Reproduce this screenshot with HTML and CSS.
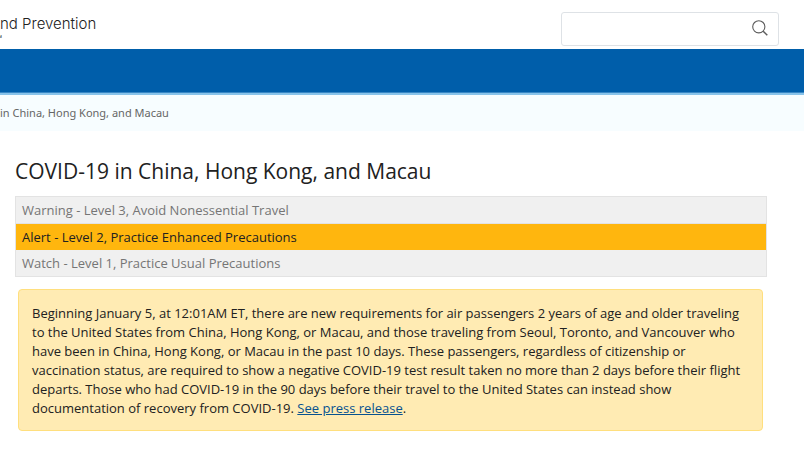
FILE: index.html
```html
<!DOCTYPE html>
<html lang="en">
<head>
<meta charset="utf-8">
<title>COVID-19 in China, Hong Kong, and Macau</title>
<link rel="stylesheet" href="styles.css">
</head>
<body>
<header class="site-header">
  <div class="brand">
    <span class="brand-name">nd Prevention</span>
    <span class="brand-mark">™</span>
  </div>
  <form class="search" role="search">
    <input class="search-input" type="search" aria-label="Search">
    <button class="search-button" type="submit" aria-label="Submit search">
      <svg viewBox="0 0 16 16" width="16" height="16" fill="none" stroke="#5c5c5c" aria-hidden="true">
        <circle cx="6.8" cy="6.8" r="6.1" stroke-width="1.1"/>
        <path d="M11.2 11.2L15.3 15.3" stroke-width="1.5"/>
      </svg>
    </button>
  </form>
</header>
<nav class="main-nav" aria-label="Main"></nav>
<div class="breadcrumb">in China, Hong Kong, and Macau</div>
<main class="content">
  <h1 class="title">COVID-19 in China, Hong Kong, and Macau</h1>
  <ul class="levels">
    <li class="level">Warning - Level 3, Avoid Nonessential Travel</li>
    <li class="level level-active">Alert - Level 2, Practice Enhanced Precautions</li>
    <li class="level">Watch - Level 1, Practice Usual Precautions</li>
  </ul>
  <p class="notice">Beginning January 5, at 12:01AM ET, there are new requirements for air passengers 2 years of age and older traveling to the United States from China, Hong Kong, or Macau, and those traveling from Seoul, Toronto, and Vancouver who have been in China, Hong Kong, or Macau in the past 10 days. These passengers, regardless of citizenship or vaccination status, are required to show a negative COVID-19 test result taken no more than 2 days before their flight departs. Those who had COVID-19 in the 90 days before their travel to the United States can instead show documentation of recovery from COVID-19. <a class="notice-link" href="#">See press release</a>.</p>
</main>
</body>
</html>
```

FILE: styles.css
```css
* {
  box-sizing: border-box;
}

body {
  margin: 0;
  background: #fff;
  color: #212121;
  font-family: "Open Sans", sans-serif;
  font-size: 13px;
  line-height: 19px;
}

.site-header {
  display: flex;
  justify-content: space-between;
  align-items: flex-start;
  padding: 12px 25px 3px 0;
}

.brand {
  display: flex;
  flex-direction: column;
  padding-top: 2px;
}

.brand-name {
  font-family: Inter, sans-serif;
  font-size: 15px;
  font-weight: 300;
  line-height: 20px;
}

.brand-mark {
  margin-left: -4px;
  font-size: 8px;
  line-height: 8px;
}

.search {
  display: flex;
  align-items: center;
  width: 28%;
  height: 34px;
  border: 1px solid #dee2e6;
  border-radius: 3px;
}

.search-input {
  flex: 1;
  min-width: 0;
  height: 100%;
  padding: 0 8px;
  border: 0;
  outline: 0;
  background: transparent;
  font: inherit;
}

.search-button {
  display: flex;
  padding: 0 10px 2px;
  border: 0;
  background: transparent;
}

.main-nav {
  height: 46px;
  background: #005eaa;
  border-bottom: 2px solid #88c3ea;
  box-shadow: inset 0 -1px #3787c5;
}

.breadcrumb {
  padding: 9px 0;
  background: #f7fdff;
  color: #666;
  font-family: "Noto Sans", sans-serif;
  font-size: 11px;
  line-height: 18px;
}

.content {
  padding: 24px 37px 24px 15px;
}

.title {
  margin: 0 0 9px;
  font-size: 21px;
  font-weight: 400;
  line-height: 32px;
}

.levels {
  margin: 0 0 12px;
  padding: 0;
  border: 1px solid #e3e3e3;
  background: #f0f0f0;
  list-style: none;
}

.level {
  padding: 4px 6px 3px;
  color: #757575;
}

.level:first-child {
  border-bottom: 1px solid #e3e3e3;
}

.level-active {
  background: #ffb60e;
  color: #212121;
}

.notice {
  margin: 0 4px 0 3px;
  padding: 14px 13px 12px;
  border: 1px solid #ffdf7e;
  border-radius: 4px;
  background: #ffebb3;
}

.notice-link {
  color: #075290;
}
```
